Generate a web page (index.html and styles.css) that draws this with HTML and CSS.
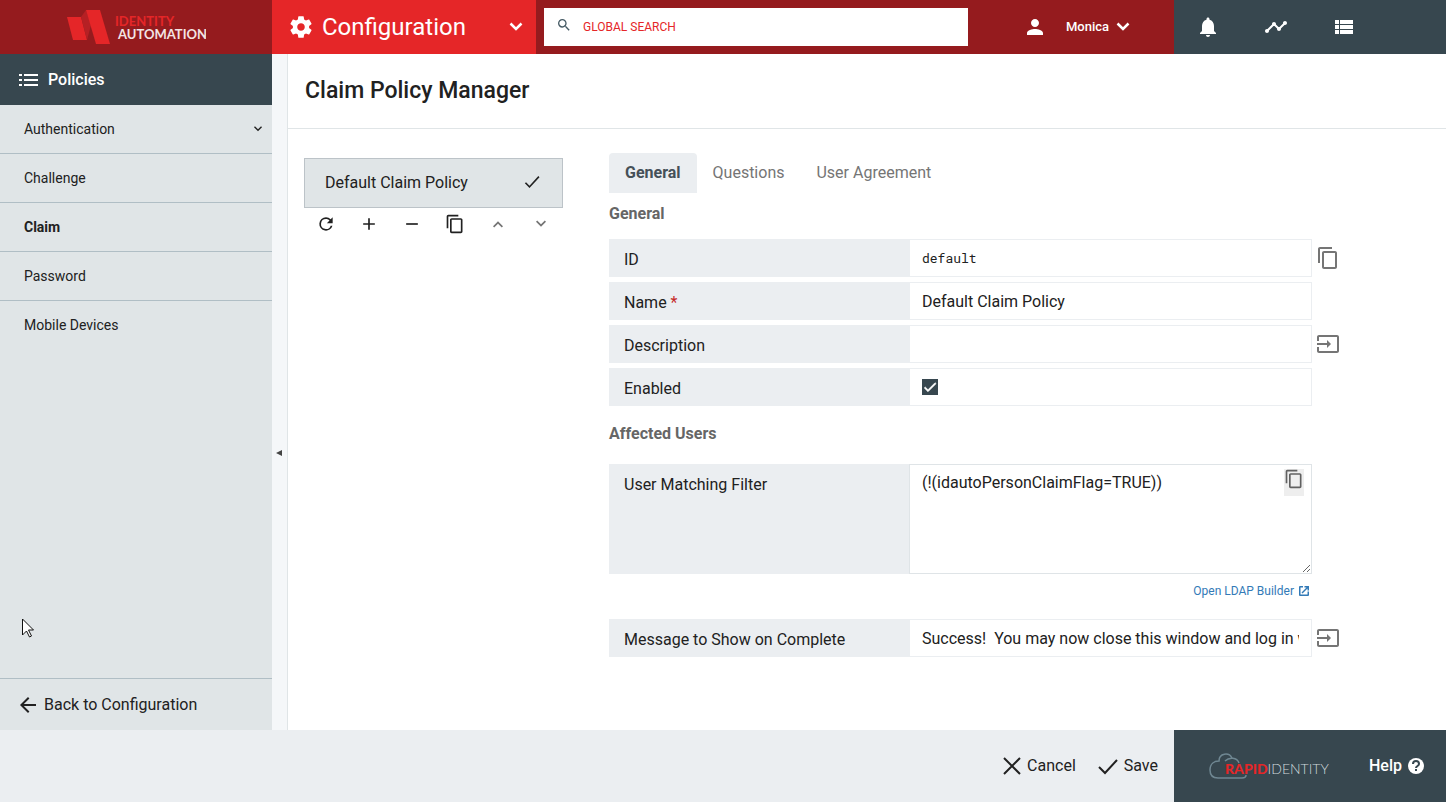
FILE: index.html
```html
<!DOCTYPE html>
<html lang="en">
<head>
    <meta charset="UTF-8">
    <title>Claim Policy Manager</title>
    <link rel="stylesheet" href="styles.css">
</head>
<body>

<!-- shared icons -->
<svg class="sprite" aria-hidden="true">
    <symbol id="chevron" viewBox="0 0 24 24"><path d="M7.41 7.84 12 12.42l4.59-4.58L18 9.25l-6 6-6-6z"/></symbol>
    <symbol id="chevron-bold" viewBox="0 0 24 24"><path fill="none" stroke="currentColor" stroke-width="2.5" d="M6.5 8.5 12 14l5.5-5.5"/></symbol>
    <symbol id="check" viewBox="0 0 24 24"><path d="M9 16.17 4.83 12l-1.42 1.41L9 19 21 7l-1.41-1.41z"/></symbol>
    <symbol id="copy" viewBox="0 0 24 24"><path d="M16 1H4c-1.1 0-2 .9-2 2v14h2V3h12V1zm3 4H8c-1.1 0-2 .9-2 2v14c0 1.1.9 2 2 2h11c1.1 0 2-.9 2-2V7c0-1.1-.9-2-2-2zm0 16H8V7h11v14z"/></symbol>
    <symbol id="input" viewBox="0 0 24 24"><path d="M21 3H3c-1.1 0-2 .9-2 2v4h2V5h18v14H3v-4H1v4c0 1.1.9 2 2 2h18c1.1 0 2-.9 2-2V5c0-1.1-.9-2-2-2zM11 16l4-4-4-4v3H1v2h10v3z"/></symbol>
</svg>

<header class="topbar">
    <a class="brand" href="#" aria-label="Identity Automation">
        <svg width="140" height="36" viewBox="0 0 140 36">
            <path fill="#e52628" d="M1 8h14l6 23H7z"/>
            <path fill="#b52024" d="M15 8l5-7 5 15-4 15z"/>
            <path fill="#e52628" d="M20 1h14l10 34H30z"/>
            <text class="brand-top" x="49" y="17">IDENTITY</text>
            <text class="brand-bottom" x="52" y="30">AUTOMATION</text>
        </svg>
    </a>
    <button class="module" type="button">
        <svg width="26" height="26" viewBox="0 0 24 24"><path d="M19.43 12.98c.04-.32.07-.64.07-.98s-.03-.66-.07-.98l2.11-1.65c.19-.15.24-.42.12-.64l-2-3.46c-.12-.22-.39-.3-.61-.22l-2.49 1c-.52-.4-1.08-.73-1.69-.98l-.38-2.65C14.46 2.18 14.25 2 14 2h-4c-.25 0-.46.18-.49.42l-.38 2.65c-.61.25-1.17.59-1.69.98l-2.49-1c-.23-.09-.49 0-.61.22l-2 3.46c-.13.22-.07.49.12.64l2.11 1.65c-.04.32-.07.65-.07.98s.03.66.07.98l-2.11 1.65c-.19.15-.24.42-.12.64l2 3.46c.12.22.39.3.61.22l2.49-1c.52.4 1.08.73 1.69.98l.38 2.65c.03.24.24.42.49.42h4c.25 0 .46-.18.49-.42l.38-2.65c.61-.25 1.17-.59 1.69-.98l2.49 1c.23.09.49 0 .61-.22l2-3.46c.12-.22.07-.49-.12-.64l-2.11-1.65zM12 15.5c-1.93 0-3.5-1.57-3.5-3.5s1.57-3.5 3.5-3.5 3.5 1.57 3.5 3.5-1.57 3.5-3.5 3.5z"/></svg>
        <span>Configuration</span>
        <svg class="module-arrow" width="24" height="24"><use href="#chevron-bold"/></svg>
    </button>
    <div class="search">
        <svg width="16" height="16" viewBox="0 0 24 24"><path d="M15.5 14h-.79l-.28-.27A6.47 6.47 0 0 0 16 9.5 6.5 6.5 0 1 0 9.5 16c1.61 0 3.09-.59 4.23-1.57l.27.28v.79l5 4.99L20.49 19l-4.99-5zm-6 0C7.01 14 5 11.99 5 9.5S7.01 5 9.5 5 14 7.01 14 9.5 11.99 14 9.5 14z"/></svg>
        <input type="text" placeholder="GLOBAL SEARCH" aria-label="Global search">
    </div>
    <button class="user" type="button">
        <svg width="24" height="24" viewBox="0 0 24 24"><path d="M12 12c2.21 0 4-1.79 4-4s-1.79-4-4-4-4 1.79-4 4 1.79 4 4 4zm0 2c-2.67 0-8 1.34-8 4v2h16v-2c0-2.66-5.33-4-8-4z"/></svg>
        <span>Monica</span>
        <svg width="24" height="24"><use href="#chevron-bold"/></svg>
    </button>
    <div class="tools">
        <button type="button" aria-label="Notifications"><svg width="24" height="24" viewBox="0 0 24 24"><path d="M12 22c1.1 0 2-.9 2-2h-4c0 1.1.89 2 2 2zm6-6v-5c0-3.07-1.64-5.64-4.5-6.32V4c0-.83-.67-1.5-1.5-1.5s-1.5.67-1.5 1.5v.68C7.63 5.36 6 7.92 6 11v5l-2 2v1h16v-1l-2-2z"/></svg></button>
        <button type="button" aria-label="Activity"><svg width="24" height="24" viewBox="0 0 24 24"><path d="M23 8c0 1.1-.9 2-2 2-.18 0-.35-.02-.51-.07l-3.56 3.55c.05.16.07.34.07.52 0 1.1-.9 2-2 2s-2-.9-2-2c0-.18.02-.36.07-.52l-2.55-2.55c-.16.05-.34.07-.52.07s-.36-.02-.52-.07l-4.55 4.56c.05.16.07.33.07.51 0 1.1-.9 2-2 2s-2-.9-2-2 .9-2 2-2c.18 0 .35.02.51.07l4.56-4.55C8.02 9.36 8 9.18 8 9c0-1.1.9-2 2-2s2 .9 2 2c0 .18-.02.36-.07.52l2.55 2.55c.16-.05.34-.07.52-.07s.36.02.52.07l3.55-3.56C19.02 8.35 19 8.18 19 8c0-1.1.9-2 2-2s2 .9 2 2z"/></svg></button>
        <button type="button" aria-label="List"><svg width="24" height="24" viewBox="0 0 24 24"><path d="M3 5h4v4H3zM8 5h13v4H8zM3 10h4v4H3zM8 10h13v4H8zM3 15h4v4H3zM8 15h13v4H8z"/></svg></button>
    </div>
</header>

<div class="workspace">
    <nav class="sidebar">
        <h2 class="sidebar-title">
            <svg width="20" height="12" viewBox="0 0 20 12"><path d="M0 0h3v2H0zM5 0h14v2H5zM0 5h3v2H0zM5 5h14v2H5zM0 10h3v2H0zM5 10h14v2H5z"/></svg>
            Policies
        </h2>
        <ul class="menu">
            <li><a href="#">Authentication <svg width="16" height="16"><use href="#chevron"/></svg></a></li>
            <li><a href="#">Challenge</a></li>
            <li><a class="current" href="#">Claim</a></li>
            <li><a href="#">Password</a></li>
            <li><a href="#">Mobile Devices</a></li>
        </ul>
        <a class="back" href="#">
            <svg width="24" height="24" viewBox="0 0 24 24"><path d="M20 11H7.83l5.59-5.59L12 4l-8 8 8 8 1.41-1.41L7.83 13H20v-2z"/></svg>
            Back to Configuration
        </a>
        <svg class="pointer" width="14" height="20" viewBox="0 0 14 20"><path fill="#fff" stroke="#111" d="M.5 1v16l4-4 3 6 2-1-3-6h5z"/></svg>
    </nav>

    <div class="splitter">
        <button type="button" aria-label="Collapse menu"><svg width="6" height="6" viewBox="0 0 6 6"><path d="M6 0v6L0 3z"/></svg></button>
    </div>

    <main class="main">
        <h1 class="page-title">Claim Policy Manager</h1>

        <div class="content">
            <section class="policies">
                <button class="policy" type="button">
                    <span>Default Claim Policy</span>
                    <svg width="20" height="20" viewBox="0 0 24 24"><path d="M9 15.17 4.83 11l-1.42 1.41L9 18 21 5l-1.41-1.41z"/></svg>
                </button>
                <div class="policy-tools">
                    <button type="button" aria-label="Refresh"><svg width="20" height="20" viewBox="0 0 24 24"><path d="M17.65 6.35A7.96 7.96 0 0 0 12 4a8 8 0 1 0 7.73 10h-2.08A5.99 5.99 0 1 1 12 6c1.66 0 3.14.69 4.22 1.78L13 11h7V4z"/></svg></button>
                    <button type="button" aria-label="Add"><svg width="20" height="20" viewBox="0 0 24 24"><path d="M19 13h-6v6h-2v-6H5v-2h6V5h2v6h6z"/></svg></button>
                    <button type="button" aria-label="Remove"><svg width="20" height="20" viewBox="0 0 24 24"><path d="M5 11h14v2H5z"/></svg></button>
                    <button type="button" aria-label="Duplicate"><svg width="20" height="20"><use href="#copy"/></svg></button>
                    <button class="muted" type="button" aria-label="Move up"><svg class="flip" width="20" height="20"><use href="#chevron"/></svg></button>
                    <button class="muted" type="button" aria-label="Move down"><svg width="20" height="20"><use href="#chevron"/></svg></button>
                </div>
            </section>

            <form class="details">
                <div class="tabs">
                    <button class="active" type="button">General</button>
                    <button type="button">Questions</button>
                    <button type="button">User Agreement</button>
                </div>

                <h3>General</h3>
                <div class="row">
                    <label for="policyId">ID</label>
                    <input class="mono" type="text" id="policyId" value="default" readonly>
                    <button type="button" aria-label="Copy ID"><svg width="24" height="24"><use href="#copy"/></svg></button>
                </div>
                <div class="row">
                    <label for="policyName">Name <span class="required">*</span></label>
                    <input type="text" id="policyName" value="Default Claim Policy">
                </div>
                <div class="row">
                    <label for="description">Description</label>
                    <input type="text" id="description">
                    <button type="button" aria-label="Expand description"><svg width="24" height="24"><use href="#input"/></svg></button>
                </div>
                <div class="row">
                    <label for="enabled">Enabled</label>
                    <div class="check-cell">
                        <input type="checkbox" id="enabled" checked>
                        <svg width="16" height="16"><use href="#check"/></svg>
                    </div>
                </div>

                <h3>Affected Users</h3>
                <div class="row">
                    <label for="filter">User Matching Filter</label>
                    <div class="filter-cell">
                        <textarea id="filter">(!(idautoPersonClaimFlag=TRUE))</textarea>
                        <button class="filter-copy" type="button" aria-label="Copy filter"><svg width="20" height="20"><use href="#copy"/></svg></button>
                    </div>
                </div>
                <div class="builder">
                    <a href="#">Open LDAP Builder
                        <svg width="10" height="10" viewBox="0 0 20 20"><path d="M17 17H3V3h5V0H2a2 2 0 0 0-2 2v16a2 2 0 0 0 2 2h16a2 2 0 0 0 2-2v-7h-3v6zM11 0v3h4L5 13l2 2L17 5v4h3V0z"/></svg>
                    </a>
                </div>
                <div class="row">
                    <label for="message">Message to Show on Complete</label>
                    <input type="text" id="message" value="Success!  You may now close this window and log in with your new password.">
                    <button type="button" aria-label="Expand message"><svg width="24" height="24"><use href="#input"/></svg></button>
                </div>
            </form>
        </div>
    </main>
</div>

<footer class="footer">
    <div class="actions">
        <button type="button"><svg width="18" height="18" viewBox="0 0 18 18"><path fill="none" stroke="currentColor" stroke-width="2" d="M1 1l16 16M17 1L1 17"/></svg>Cancel</button>
        <button type="button"><svg width="20" height="18" viewBox="0 0 20 18"><path fill="none" stroke="currentColor" stroke-width="2" d="M1 10l6 6L19 3"/></svg>Save</button>
    </div>
    <div class="footer-brand">
        <svg width="122" height="28" viewBox="0 0 122 28" role="img" aria-label="RapidIdentity">
            <path fill="none" stroke="#6f8792" stroke-width="1.5" d="M37 23c0 2-2 3-4 3H9C4 26 1 23 1 18c0-6 4-9 9-9 0-8 10-9 13-3M16 9c4-4 12-4 14 2"/>
            <text x="16" y="22"><tspan class="rapid">RAPID</tspan><tspan class="identity">IDENTITY</tspan></text>
        </svg>
        <a class="help" href="#">Help
            <svg width="16" height="16" viewBox="0 0 16 16"><circle cx="8" cy="8" r="8"/><path fill="none" stroke="#37474f" stroke-width="2" d="M5 6c0-4 6-4 6 0 0 2-3 2-3 4M8 11v2"/></svg>
        </a>
    </div>
</footer>

</body>
</html>
```
FILE: styles.css
```css
* { box-sizing: border-box; }
body {
    margin: 0; min-height: 100vh; display: flex; flex-direction: column;
    font-family: Roboto, "Liberation Sans", sans-serif; font-size: 16px; line-height: 20px;
    color: #212121; background: #fff;
}
button, input, textarea { font: inherit; color: inherit; }
button { padding: 0; border: 0; background: none; cursor: pointer; }
a { color: inherit; text-decoration: none; }
svg { display: block; flex: none; fill: currentColor; }
h1, h2, h3 { margin: 0; }
.sprite { position: absolute; width: 0; height: 0; }

/* top bar */
.topbar { display: flex; height: 54px; background: #951b1e; color: #fff; }
.brand { width: 272px; display: flex; align-items: center; justify-content: center; }
.brand text { font-family: Lato, sans-serif; font-size: 13px; font-weight: 700; }
.brand-top { fill: #e52628; }
.brand-bottom { fill: #f3e4e4; }
.module {
    width: 264px; padding: 0 8px 0 16px; display: flex; align-items: center; gap: 8px;
    background: #e52628; font-size: 24px; line-height: 32px;
}
.module-arrow { margin-left: auto; }
.search { flex: 1; margin: 8px 0 8px 8px; display: flex; background: #fff; }
.search svg { margin: 9px 0 0 12px; color: #455a64; }
.search input { flex: 1; min-width: 0; padding: 0 11px; border: 0; background: none; font-size: 12px; color: #e52628; outline: 0; }
.search input::placeholder { color: #e52628; opacity: 1; }
.user { width: 206px; padding-left: 55px; display: flex; align-items: center; font-size: 13px; font-weight: 500; }
.user span { margin: 0 2px 0 19px; }
.tools { width: 272px; display: grid; grid-template-columns: repeat(4, 1fr); background: #37474f; }
.tools button { display: flex; align-items: center; justify-content: center; }

/* side menu */
.workspace { flex: 1; display: flex; }
.sidebar { position: relative; width: 272px; display: flex; flex-direction: column; background: #e0e5e7; }
.sidebar-title {
    height: 51px; padding-left: 19px; display: flex; align-items: center; gap: 9px;
    background: #37474f; color: #fff; font-size: 16px; font-weight: 500;
}
.menu { flex: 1; margin: 0; padding: 0; list-style: none; font-size: 14px; }
.menu li + li { border-top: 1px solid #b0bec5; }
.menu a { height: 48px; padding: 0 6px 0 24px; display: flex; align-items: center; justify-content: space-between; }
.menu .current { font-weight: 700; }
.back { height: 52px; padding-left: 16px; display: flex; align-items: center; gap: 4px; border-top: 1px solid #b0bec5; }
.pointer { position: absolute; left: 22px; bottom: 92px; }
.splitter { width: 16px; padding: 396px 1px 0 0; background: #f5f7f9; border-right: 1px solid #e0e5e7; }
.splitter button { display: block; margin: 0 auto; color: #444; }

/* page */
.main { flex: 1; min-width: 0; }
.page-title { height: 75px; padding: 21px 17px; border-bottom: 1px solid #e0e5e7; font-size: 23px; line-height: 32px; font-weight: 500; }
.content { display: flex; gap: 46px; padding: 24px 110px 24px 16px; }
.policies { width: 259px; padding-top: 5px; }
.policy {
    width: 100%; height: 50px; padding: 0 20px; display: flex; align-items: center; justify-content: space-between;
    background: #e0e5e7; border: 1px solid #bcc3c8;
}
.policy-tools { display: grid; grid-template-columns: repeat(6, 1fr); height: 32px; }
.policy-tools button { display: flex; align-items: center; justify-content: center; }
.policy-tools .muted { color: #757575; }
.flip { transform: rotate(180deg); }

/* policy form */
.details { flex: 1; min-width: 0; }
.tabs { display: flex; }
.tabs button { height: 40px; padding: 0 16px; color: #757575; }
.tabs .active { background: #ebeef1; border-radius: 4px 4px 0 0; color: #455058; font-weight: 700; }
.details h3 { height: 46px; padding-top: 11px; font-size: 16px; font-weight: 700; color: #666; }
.row { display: grid; grid-template-columns: 300px 1fr 24px; margin-bottom: 5px; }
.row label { padding: 11px 15px 7px; background: #ebeef1; }
.row > input, .check-cell, textarea { width: 100%; height: 38px; padding: 0 12px; border: 1px solid #ebeef1; border-radius: 0; background: #fff; outline: 0; }
.row > button { display: flex; align-items: center; padding-left: 4px; color: #757575; }
.row .mono { font-family: "Roboto Mono", "Liberation Mono", monospace; font-size: 13px; }
.required { color: #c62828; }
.check-cell { display: flex; align-items: center; }
.check-cell input { appearance: none; width: 16px; height: 16px; margin: 0; border: 1px solid #37474f; }
.check-cell input:checked { background: #37474f; }
.check-cell svg { margin-left: -16px; color: #fff; stroke: #fff; pointer-events: none; }
.row + h3 { height: 53px; padding-top: 13px; }
.filter-cell { position: relative; display: flex; }
.row textarea { height: 110px; padding: 8px 12px; border-color: #dfe4e7; resize: vertical; }
.filter-copy { position: absolute; top: 5px; right: 8px; width: 20px; height: 27px; display: flex; background: #eee; color: #616161; }
.builder { display: flex; justify-content: flex-end; margin: 7px 27px 18px 0; font-size: 12px; color: #337ab7; }
.builder a { display: flex; align-items: center; gap: 5px; }

/* footer */
.footer { display: flex; height: 72px; background: #ebeef1; }
.actions { flex: 1; display: flex; align-items: center; justify-content: flex-end; gap: 22px; padding-right: 16px; }
.actions button { display: flex; align-items: center; gap: 6px; }
.footer-brand { width: 272px; padding: 0 22px 0 35px; display: flex; align-items: center; justify-content: space-between; background: #37474f; color: #fff; }
.footer-brand text { font-family: Lato, sans-serif; font-size: 14px; }
.rapid { fill: #e52628; font-weight: 900; }
.identity { fill: #cfd8dc; font-weight: 300; }
.help { display: flex; align-items: center; gap: 6px; font-weight: 500; }
```
